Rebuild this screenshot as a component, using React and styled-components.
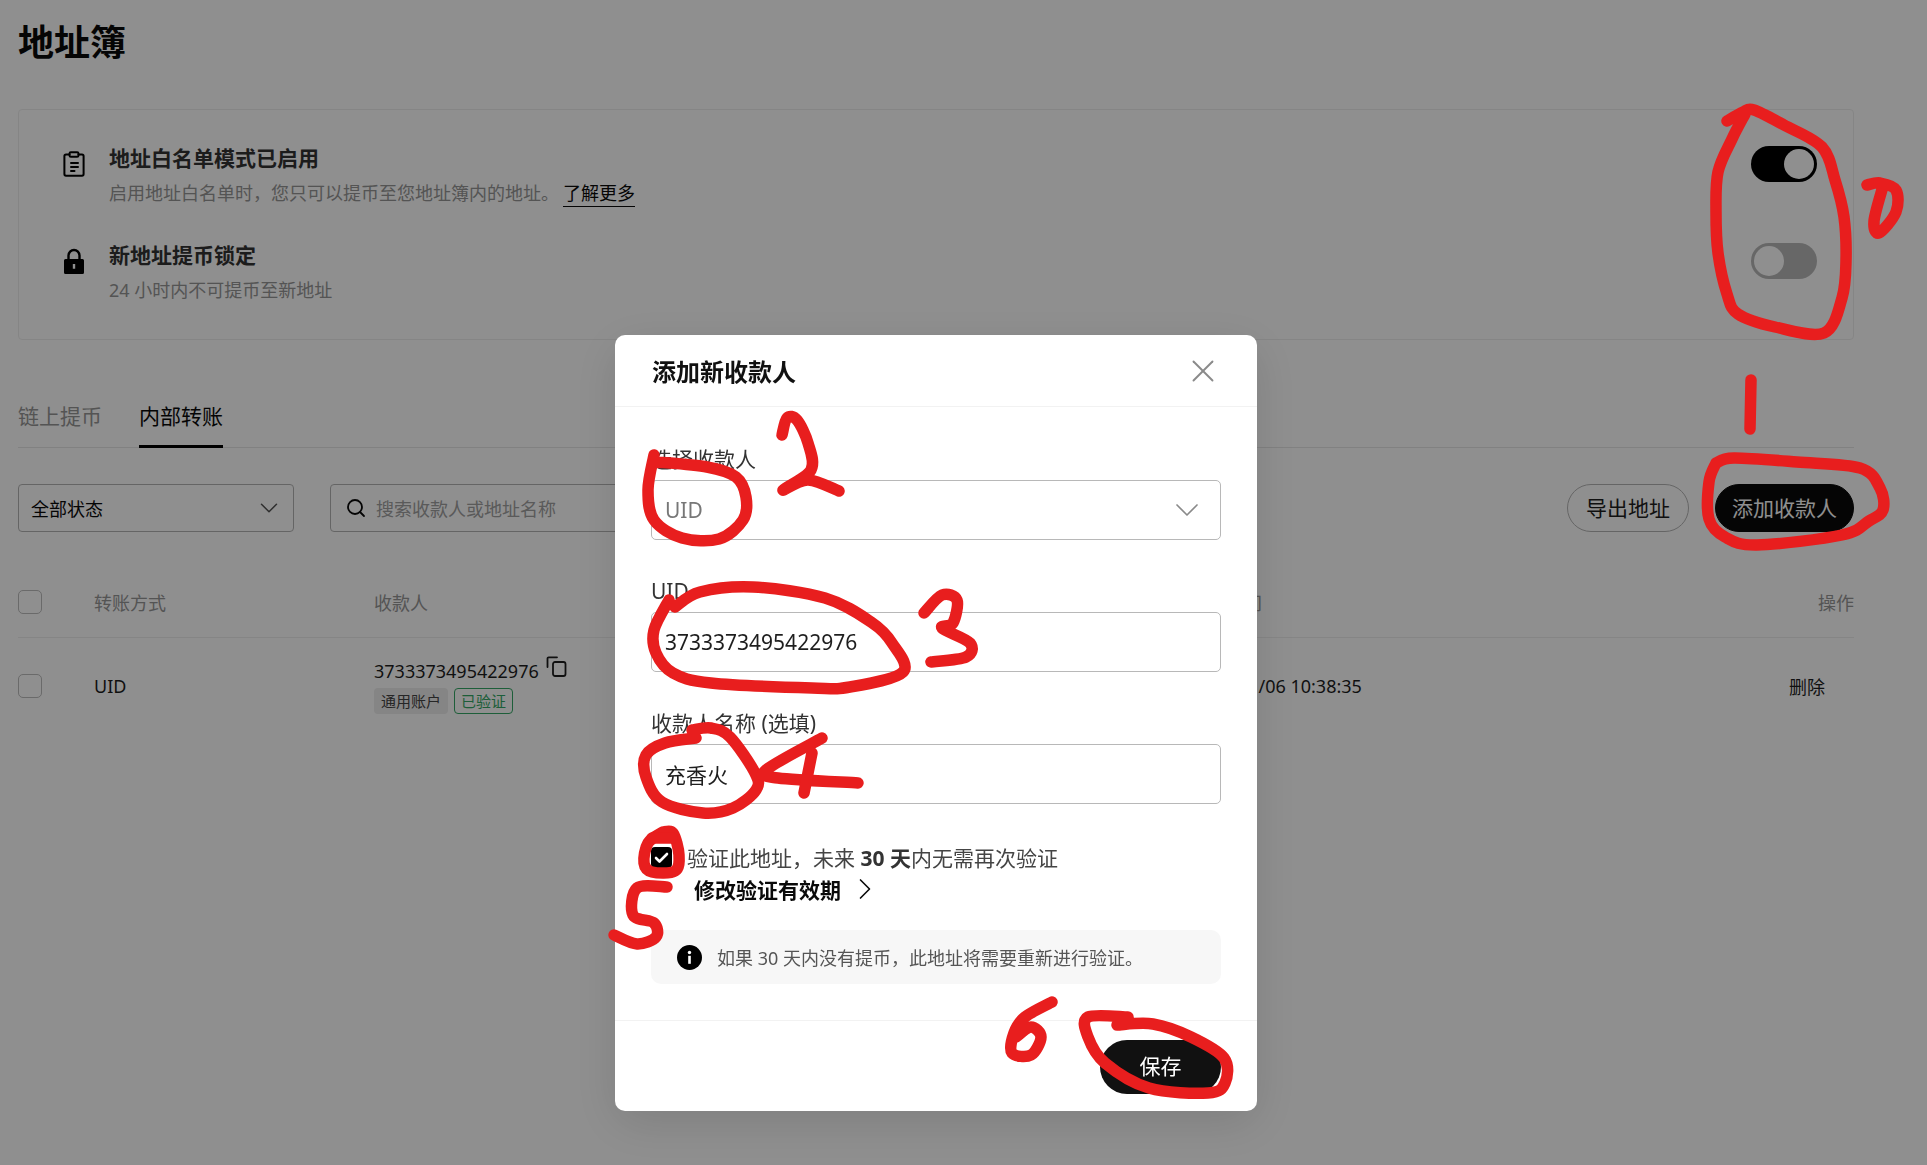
import styled, { createGlobalStyle } from "styled-components";
import { ChevronDown, ChevronRight, X } from "lucide-react";

const GlobalStyle = createGlobalStyle`
    html, body {
        margin: 0;
        padding: 0;
        background: #fff;
        font-family: "Noto Sans", "Noto Sans CJK SC", sans-serif;
        color: #1e1e1e;
    }
    * {
        box-sizing: border-box;
    }
`

const Page = styled.main`
    width: 1927px;
    height: 1165px;
    overflow: hidden;
    padding: 18px 73px 0 18px;
    background: #fff;
`

const PageTitle = styled.h1`
    margin: 0 0 42px;
    font-size: 36px;
    line-height: 49px;
    font-weight: 700;
    color: #0a0a0a;
`

const SettingsCard = styled.section`
    display: flex;
    flex-direction: column;
    gap: 31px;
    height: 231px;
    padding: 32px 36px 0 44px;
    border: 1px solid #eeeeee;
    border-radius: 4px;
`

const SettingRow = styled.div`
    display: flex;
    align-items: flex-start;
    gap: 24px;
`

const SettingIcon = styled.svg`
    flex: none;
    width: 22px;
    height: 26px;
    margin-top: 9px;
    color: #000;
`

const SettingText = styled.div`
    flex: 1;
`

const SettingTitle = styled.div`
    font-size: 21px;
    line-height: 32px;
    font-weight: 700;
    color: #333;
`

const SettingHint = styled.div`
    margin-top: 4px;
    font-size: 18px;
    line-height: 30px;
    color: #969696;
`

const LearnMore = styled.a`
    margin-left: 4px;
    color: #0a0a0a;
    border-bottom: 1px solid #0a0a0a;
    padding-bottom: 1px;
`

const Toggle = styled.span`
    flex: none;
    display: flex;
    justify-content: ${props => (props.$on ? "flex-end" : "flex-start")};
    width: 66px;
    height: 36px;
    margin-top: 4px;
    padding: 3px;
    border-radius: 18px;
    background: ${props => (props.$on ? "#000" : "#b8b8b8")};

    &::after {
        content: "";
        width: 30px;
        height: 30px;
        border-radius: 50%;
        background: #fff;
    }
`

const Tabs = styled.nav`
    display: flex;
    gap: 37px;
    margin-top: 60px;
    height: 48px;
    border-bottom: 1px solid #e6e6e6;
`

const Tab = styled.span`
    height: 48px;
    font-size: 21px;
    line-height: 32px;
    color: ${props => (props.$active ? "#0a0a0a" : "#969696")};
    border-bottom: 3px solid ${props => (props.$active ? "#000" : "transparent")};
`

const Toolbar = styled.div`
    display: flex;
    align-items: center;
    gap: 36px;
    margin-top: 36px;
`

const FilterSelect = styled.div`
    display: flex;
    align-items: center;
    justify-content: space-between;
    width: 276px;
    height: 48px;
    padding: 0 9px 0 12px;
    border: 1px solid #b5b5b5;
    border-radius: 4px;
    font-size: 18px;
    color: #0a0a0a;

    svg {
        color: #555;
    }
`

const SearchBox = styled.div`
    display: flex;
    align-items: center;
    gap: 10px;
    width: 380px;
    height: 48px;
    padding: 0 15px;
    border: 1px solid #b5b5b5;
    border-radius: 4px;
    font-size: 18px;
    color: #a0a0a0;
`

const ToolbarActions = styled.div`
    display: flex;
    gap: 26px;
    margin-left: auto;
`

const PillButton = styled.span`
    display: flex;
    align-items: center;
    justify-content: center;
    width: ${props => props.$width}px;
    height: 48px;
    padding-bottom: 2px;
    border-radius: 24px;
    font-size: 21px;
    border: 1px solid ${props => (props.$primary ? "#0a0a0a" : "#b5b5b5")};
    background: ${props => (props.$primary ? "#0a0a0a" : "transparent")};
    color: ${props => (props.$primary ? "#fff" : "#1e1e1e")};
`

const TableRow = styled.div`
    display: grid;
    grid-template-columns: 76px 280px 816px 1fr auto;
    align-items: center;
    height: ${props => (props.$head ? "71px" : "96px")};
    margin-top: ${props => (props.$head ? "35px" : "0")};
    border-bottom: ${props => (props.$head ? "1px solid #eeeeee" : "none")};
    font-size: 18px;
    color: ${props => (props.$head ? "#969696" : "#1e1e1e")};
`

const RowCheck = styled.span`
    display: block;
    width: 24px;
    height: 24px;
    border: 1px solid #bdbdbd;
    border-radius: 5px;
`

const PayeeLine = styled.div`
    display: flex;
    align-items: flex-start;
    gap: 7px;
    line-height: 24px;
`

const CopyIcon = styled.svg`
    width: 21px;
    height: 21px;
    margin-top: -3px;
`

const TagRow = styled.div`
    display: flex;
    gap: 6px;
    margin-top: 5px;
`

const Tag = styled.span`
    height: 26px;
    padding: 0 6px;
    border-radius: 4px;
    font-size: 15px;
    line-height: 24px;
    border: 1px solid ${props => (props.$green ? "#35a866" : "transparent")};
    background: ${props => (props.$green ? "transparent" : "#ededed")};
    color: ${props => (props.$green ? "#35a866" : "#444")};
`

const DeleteAction = styled.span`
    padding-right: 29px;
    color: #1e1e1e;
`

const Mask = styled.div`
    position: fixed;
    inset: 0;
    padding: 335px 0 0 615px;
    background: rgba(0, 0, 0, 0.44);
`

const Modal = styled.div`
    width: 642px;
    height: 776px;
    border-radius: 10px;
    background: #fff;
    box-shadow: 0 12px 48px rgba(0, 0, 0, 0.12);
`

const ModalHeader = styled.header`
    display: flex;
    align-items: center;
    justify-content: space-between;
    height: 72px;
    padding: 0 35px 0 37px;
    border-bottom: 1px solid #f2f2f2;
    font-size: 24px;
    font-weight: 700;
    color: #111;

    svg {
        color: #8a8a8a;
    }
`

const ModalBody = styled.div`
    padding: 40px 36px 36px;
    border-bottom: 1px solid #f2f2f2;
`

const Field = styled.div`
    display: flex;
    flex-direction: column;
    gap: 9px;
    margin-bottom: 39px;
`

const FieldLabel = styled.label`
    font-size: 21px;
    line-height: 24px;
    color: #333;
`

const FieldBox = styled.div`
    display: flex;
    align-items: center;
    justify-content: space-between;
    height: 60px;
    padding: 0 13px 1px 13px;
    border: 1px solid #b8b8b8;
    border-radius: 5px;
    font-size: 21px;
    color: ${props => (props.$muted ? "#777" : "#1e1e1e")};

    svg {
        color: #8a8a8a;
    }
`

const VerifyRow = styled.div`
    display: flex;
    align-items: center;
    gap: 15px;
    height: 26px;
    margin-top: 40px;
    font-size: 21px;
    color: #444;

    b {
        color: #333;
    }
`

const CheckedBox = styled.span`
    display: flex;
    align-items: center;
    justify-content: center;
    width: 21px;
    height: 21px;
    border-radius: 4px;
    background: #000;
`

const ChangePeriod = styled.div`
    display: flex;
    align-items: center;
    gap: 6px;
    height: 26px;
    margin: 6px 0 28px 43px;
    font-size: 21px;
    font-weight: 700;
    color: #0a0a0a;
`

const Notice = styled.div`
    display: flex;
    align-items: center;
    gap: 15px;
    height: 54px;
    padding: 0 26px;
    border-radius: 10px;
    background: #f7f7f7;
    font-size: 18px;
    color: #555;
`

const ModalFooter = styled.footer`
    display: flex;
    justify-content: flex-end;
    padding: 19px 36px 0;
`

const SaveButton = styled.span`
    display: flex;
    align-items: center;
    justify-content: center;
    width: 121px;
    height: 54px;
    padding-bottom: 5px;
    border-radius: 27px;
    background: #111;
    color: #fff;
    font-size: 21px;
`

const Scribbles = styled.svg`
    position: absolute;
    left: 0;
    top: 0;
    width: 1927px;
    height: 1165px;
    pointer-events: none;

    path {
        fill: none;
        stroke: #e81e1e;
        stroke-width: ${props => props.$width}px;
        stroke-linecap: round;
        stroke-linejoin: round;
    }
`

// hand-drawn marks, as points in page coordinates
const marks = [
    [[1727, 121], [1743, 112], [1754, 110], [1784, 125], [1822, 147], [1835, 180], [1844, 217], [1846, 261], [1842, 298], [1824, 333], [1775, 327], [1738, 314], [1727, 294], [1718, 253], [1716, 212], [1718, 172], [1732, 139], [1745, 114]],
    [[1867, 185], [1880, 183], [1896, 190], [1896, 212], [1879, 233], [1874, 221], [1883, 186]],
    [[1751, 380], [1750, 429]],
    [[1716, 463], [1734, 458], [1797, 462], [1860, 468], [1880, 488], [1883, 510], [1869, 521], [1842, 535], [1757, 545], [1725, 537], [1709, 519], [1709, 482], [1716, 463]],
    [[782, 435], [787, 418], [797, 420], [808, 443], [811, 470], [783, 490], [808, 480], [839, 491]],
    [[654, 455], [648, 490], [654, 520], [682, 538], [719, 539], [743, 520], [746, 497], [736, 477], [707, 467], [656, 462]],
    [[675, 607], [700, 592], [753, 587], [825, 598], [871, 622], [892, 643], [903, 672], [850, 687], [812, 688], [711, 683], [673, 673], [656, 653], [654, 630], [669, 600]],
    [[924, 613], [942, 595], [957, 600], [953, 623], [942, 628], [970, 643], [966, 657], [931, 662]],
    [[696, 738], [665, 743], [646, 755], [646, 777], [662, 802], [703, 813], [733, 808], [756, 790], [755, 773], [730, 737], [711, 728], [692, 730]],
    [[822, 738], [766, 770], [778, 778], [858, 783]],
    [[812, 753], [804, 793]],
    [[663, 832], [648, 843], [644, 863], [652, 872], [675, 871], [679, 855], [673, 833], [663, 832]],
    [[652, 838], [672, 838]],
    [[667, 887], [637, 888], [633, 915], [654, 923], [656, 937], [637, 944], [614, 935]],
    [[1052, 1002], [1025, 1017], [1014, 1033], [1012, 1053], [1031, 1055], [1041, 1037], [1031, 1027], [1016, 1037]],
    [[1128, 1017], [1088, 1017], [1088, 1037], [1105, 1063], [1149, 1088], [1208, 1093], [1225, 1083], [1224, 1058], [1191, 1037], [1153, 1024], [1117, 1025]],
]

const smooth = pts => {
    let d = `M${pts[0][0]} ${pts[0][1]}`
    for (let i = 0; i < pts.length - 1; i++) {
        const p0 = pts[i - 1] || pts[i]
        const p1 = pts[i]
        const p2 = pts[i + 1]
        const p3 = pts[i + 2] || p2
        const c1 = [p1[0] + (p2[0] - p0[0]) / 6, p1[1] + (p2[1] - p0[1]) / 6]
        const c2 = [p2[0] - (p3[0] - p1[0]) / 6, p2[1] - (p3[1] - p1[1]) / 6]
        d += ` C${c1[0]} ${c1[1]} ${c2[0]} ${c2[1]} ${p2[0]} ${p2[1]}`
    }
    return d
}

const ClipboardIcon = () => (
    <SettingIcon viewBox="0 0 22 26" fill="none" stroke="currentColor" strokeWidth="2" strokeLinecap="round">
        <path d="M6.5 3.5H3a1.6 1.6 0 0 0-1.6 1.6v18a1.6 1.6 0 0 0 1.6 1.6h16a1.6 1.6 0 0 0 1.6-1.6v-18A1.6 1.6 0 0 0 19 3.5h-3.5" />
        <rect x="6.5" y="1.2" width="9" height="4.6" rx="1.4" />
        <path d="M8 12h7M8 16h7M8 20h3.5" />
    </SettingIcon>
)

const LockIcon = () => (
    <SettingIcon viewBox="0 0 22 26">
        <path fill="none" stroke="currentColor" strokeWidth="2.4" d="M5.5 12V7.5a5.5 5.5 0 0 1 11 0V12" />
        <path fillRule="evenodd" fill="currentColor" d="M2.5 11h17A1.5 1.5 0 0 1 21 12.5v12a1.5 1.5 0 0 1-1.5 1.5h-17A1.5 1.5 0 0 1 1 24.5v-12A1.5 1.5 0 0 1 2.5 11ZM9.8 16v4.8h2.4V16Z" />
    </SettingIcon>
)

const SearchIcon = () => (
    <svg width="20" height="20" viewBox="0 0 20 20" fill="none" stroke="#0a0a0a" strokeWidth="1.8" strokeLinecap="round">
        <circle cx="9" cy="9" r="7" />
        <path d="M14 14l4 4" />
    </svg>
)

const InfoIcon = () => (
    <svg width="25" height="25" viewBox="0 0 25 25">
        <circle cx="12.5" cy="12.5" r="12.5" fill="#000" />
        <circle cx="12.5" cy="7.5" r="1.7" fill="#fff" />
        <rect x="11.2" y="10.8" width="2.6" height="8" fill="#fff" />
    </svg>
)

const App = () => {
    return (
        <>
            <GlobalStyle />
            <Page>
                <PageTitle>地址簿</PageTitle>
                <SettingsCard>
                    <SettingRow>
                        <ClipboardIcon />
                        <SettingText>
                            <SettingTitle>地址白名单模式已启用</SettingTitle>
                            <SettingHint>
                                启用地址白名单时，您只可以提币至您地址簿内的地址。
                                <LearnMore>了解更多</LearnMore>
                            </SettingHint>
                        </SettingText>
                        <Toggle $on />
                    </SettingRow>
                    <SettingRow>
                        <LockIcon />
                        <SettingText>
                            <SettingTitle>新地址提币锁定</SettingTitle>
                            <SettingHint>24 小时内不可提币至新地址</SettingHint>
                        </SettingText>
                        <Toggle />
                    </SettingRow>
                </SettingsCard>

                <Tabs>
                    <Tab>链上提币</Tab>
                    <Tab $active>内部转账</Tab>
                </Tabs>

                <Toolbar>
                    <FilterSelect>
                        全部状态
                        <ChevronDown size={30} strokeWidth={1.2} />
                    </FilterSelect>
                    <SearchBox>
                        <SearchIcon />
                        搜索收款人或地址名称
                    </SearchBox>
                    <ToolbarActions>
                        <PillButton $width={122}>导出地址</PillButton>
                        <PillButton $width={139} $primary>添加收款人</PillButton>
                    </ToolbarActions>
                </Toolbar>

                <TableRow $head>
                    <RowCheck />
                    <span>转账方式</span>
                    <span>收款人</span>
                    <span>创建时间</span>
                    <span>操作</span>
                </TableRow>
                <TableRow>
                    <RowCheck />
                    <span>UID</span>
                    <div>
                        <PayeeLine>
                            3733373495422976
                            <CopyIcon viewBox="0 0 21 21" fill="none" stroke="#1e1e1e" strokeWidth="1.8" strokeLinecap="round">
                                <path d="M1.5 11V2.5a1.2 1.2 0 0 1 1.2-1.2H11" />
                                <rect x="7" y="6" width="12.5" height="14" rx="2" />
                            </CopyIcon>
                        </PayeeLine>
                        <TagRow>
                            <Tag>通用账户</Tag>
                            <Tag $green>已验证</Tag>
                        </TagRow>
                    </div>
                    <span>2024/11/06 10:38:35</span>
                    <DeleteAction>删除</DeleteAction>
                </TableRow>
            </Page>

            <Mask>
                <Modal>
                    <ModalHeader>
                        添加新收款人
                        <X size={38} strokeWidth={1.2} />
                    </ModalHeader>
                    <ModalBody>
                        <Field>
                            <FieldLabel>选择收款人</FieldLabel>
                            <FieldBox $muted>
                                UID
                                <ChevronDown size={40} strokeWidth={1} />
                            </FieldBox>
                        </Field>
                        <Field>
                            <FieldLabel>UID</FieldLabel>
                            <FieldBox>3733373495422976</FieldBox>
                        </Field>
                        <Field>
                            <FieldLabel>收款人名称 (选填)</FieldLabel>
                            <FieldBox>充香火</FieldBox>
                        </Field>
                        <VerifyRow>
                            <CheckedBox>
                                <svg width="15" height="15" viewBox="0 0 15 15" fill="none" stroke="#fff" strokeWidth="2.6" strokeLinecap="round" strokeLinejoin="round">
                                    <path d="M2 8l3.5 3.5L13 4" />
                                </svg>
                            </CheckedBox>
                            <span>验证此地址，未来 <b>30 天</b>内无需再次验证</span>
                        </VerifyRow>
                        <ChangePeriod>
                            修改验证有效期
                            <ChevronRight size={36} strokeWidth={1.1} />
                        </ChangePeriod>
                        <Notice>
                            <InfoIcon />
                            如果 30 天内没有提币，此地址将需要重新进行验证。
                        </Notice>
                    </ModalBody>
                    <ModalFooter>
                        <SaveButton>保存</SaveButton>
                    </ModalFooter>
                </Modal>
            </Mask>

            <Scribbles $width={11.5} viewBox="0 0 1927 1165">
                {marks.map((pts, i) => <path key={i} d={smooth(pts)} />)}
            </Scribbles>
        </>
    )
}

export default App;
